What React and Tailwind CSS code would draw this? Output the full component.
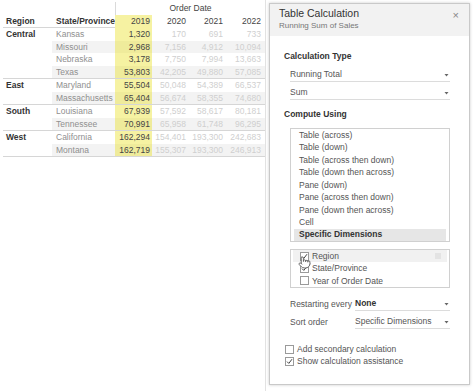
import React from "react";
import { Pointer } from "lucide-react";

const groups = [
  { region: "Central", rows: [
    ["Kansas", "1,320", "170", "691", "733"],
    ["Missouri", "2,968", "7,156", "4,912", "10,094"],
    ["Nebraska", "3,178", "7,750", "7,994", "13,663"],
    ["Texas", "53,803", "42,205", "49,880", "57,085"],
  ]},
  { region: "East", rows: [
    ["Maryland", "55,504", "50,048", "54,389", "66,537"],
    ["Massachusetts", "65,404", "56,674", "58,355", "74,680"],
  ]},
  { region: "South", rows: [
    ["Louisiana", "67,939", "57,592", "58,617", "80,181"],
    ["Tennessee", "70,991", "65,958", "61,748", "96,295"],
  ]},
  { region: "West", rows: [
    ["California", "162,294", "154,401", "193,300", "242,683"],
    ["Montana", "162,719", "155,307", "193,300", "246,913"],
  ]},
];

const computeItems = [
  "Table (across)",
  "Table (down)",
  "Table (across then down)",
  "Table (down then across)",
  "Pane (down)",
  "Pane (across then down)",
  "Pane (down then across)",
  "Cell",
];

function Caret() {
  return (
    <svg width="5" height="4" viewBox="0 0 5 4" className="shrink-0">
      <path d="M0.5 1 L4.5 1 L2.5 3.5 Z" fill="#666" />
    </svg>
  );
}

function Check({ checked }) {
  return (
    <div className="w-[9px] h-[9px] border border-[#9a9a9a] bg-white flex items-center justify-center shrink-0">
      {checked && (
        <svg width="7" height="7" viewBox="0 0 7 7">
          <path d="M1 3.6 L2.8 5.4 L6 1.2" fill="none" stroke="#444" strokeWidth="1" />
        </svg>
      )}
    </div>
  );
}

function Dropdown({ children, bold }) {
  return (
    <div className={`flex-1 h-[14px] border-b border-[#dcdcdc] flex items-center justify-between pr-[1px] ${bold ? "font-bold text-[#333]" : "text-[#555]"}`}>
      <span>{children}</span>
      <Caret />
    </div>
  );
}

export default function App() {
  return (
    <div className="w-[474px] h-[391px] bg-white flex font-['Liberation_Sans',Arial,sans-serif] text-[8.5px] leading-none overflow-hidden">
      {/* Table view */}
      <div className="w-[266px] h-[391px] border-r border-[#e2e2e2] pl-[3px] shrink-0">
        <div className="flex h-[15px] pt-[2px]">
          <div className="w-[112px]" />
          <div className="w-[150px] border-l border-[#dadada] flex items-center justify-center text-[#444]">
            Order Date
          </div>
        </div>
        <div className="flex h-[13px]">
          <div className="w-[112px] flex border-b border-[#d6d6d6] text-[#333] font-bold">
            <div className="w-[49px] pl-[3px] flex items-center">Region</div>
            <div className="w-[63px] pl-[4px] flex items-center">State/Province</div>
          </div>
          <div className="w-[37px] bg-[#f6f2a2] text-right pr-[2px] flex items-center justify-end text-[#444]">2019</div>
          <div className="w-[37px] pr-[3px] flex items-center justify-end text-[#444]">2020</div>
          <div className="w-[37px] pr-[3px] flex items-center justify-end text-[#444]">2021</div>
          <div className="w-[39px] pr-[4px] flex items-center justify-end text-[#444]">2022</div>
        </div>
        {groups.map((g) => (
          <div key={g.region} className="flex border-b border-[#d6d6d6]">
            <div className="w-[49px] pl-[3px] pt-[2px] font-bold text-[#333]">{g.region}</div>
            <div className="flex flex-col">
              {g.rows.map((r, i) => (
                <div key={r[0]} className={`flex h-[12.5px] ${i % 2 === 1 ? "bg-[#f3f3f3]" : ""}`}>
                  <div className="w-[63px] pl-[4px] flex items-center text-[#8f8f8f]">{r[0]}</div>
                  <div className={`w-[37px] pr-[2px] flex items-center justify-end text-[#444] ${i % 2 === 1 ? "bg-[#efeb9b]" : "bg-[#f6f2a2]"}`}>{r[1]}</div>
                  <div className="w-[37px] pr-[3px] flex items-center justify-end text-[#cfcfcf]">{r[2]}</div>
                  <div className="w-[37px] pr-[3px] flex items-center justify-end text-[#cfcfcf]">{r[3]}</div>
                  <div className="w-[39px] pr-[4px] flex items-center justify-end text-[#cfcfcf]">{r[4]}</div>
                </div>
              ))}
            </div>
          </div>
        ))}
      </div>

      {/* Table Calculation panel */}
      <div className="relative ml-[3px] mt-[3px] w-[201px] h-[382px] border border-[#c9c9c9] shadow-[0_0_3px_rgba(0,0,0,0.2)] bg-white shrink-0 flex flex-col">
        <div className="h-[32px] bg-[#f2f2f2] pl-[9px] pr-[10px] pt-[3px] flex justify-between">
          <div className="flex flex-col">
            <span className="text-[10.5px] leading-[13px] text-[#333]">Table Calculation</span>
            <span className="text-[8px] leading-[11px] text-[#777]">Running Sum of Sales</span>
          </div>
          <span className="text-[11px] leading-[13px] text-[#888] mt-[2px]">×</span>
        </div>

        <div className="pl-[14px] pr-[19px] flex flex-col">
          <div className="mt-[15px] h-[11px] flex items-center font-bold text-[#333]">Calculation Type</div>
          <div className="mt-[6px] pl-[6px] flex"><Dropdown>Running Total</Dropdown></div>
          <div className="mt-[4px] pl-[6px] flex"><Dropdown>Sum</Dropdown></div>

          <div className="mt-[9px] h-[11px] flex items-center font-bold text-[#333]">Compute Using</div>
          <div className="mt-[8px] ml-[6px] h-[114px] border border-[#d0d0d0] px-[3px] flex flex-col text-[#555]">
            {computeItems.map((t) => (
              <div key={t} className="h-[12.5px] pl-[5px] flex items-center">{t}</div>
            ))}
            <div className="h-[12.5px] pl-[5px] flex items-center bg-[#e6e6e6] font-bold text-[#333]">Specific Dimensions</div>
          </div>

          <div className="relative mt-[7px] ml-[6px] h-[39px] border border-[#d0d0d0] px-[2px] flex flex-col text-[#555]">
            <div className="h-[12.5px] pl-[7px] pr-[6px] flex items-center gap-[3px] bg-[#f1f1f1]">
              <Check checked />
              <span className="flex-1">Region</span>
              <svg width="6" height="6" viewBox="0 0 6 6">
                <path d="M0 1 H6 M0 3 H6 M0 5 H6" stroke="#cfcfcf" strokeWidth="0.8" />
              </svg>
            </div>
            <div className="h-[12.5px] pl-[7px] flex items-center gap-[3px]">
              <Check checked />
              <span>State/Province</span>
            </div>
            <div className="h-[12.5px] pl-[7px] flex items-center gap-[3px]">
              <Check />
              <span>Year of Order Date</span>
            </div>
            <Pointer
              size={13}
              strokeWidth={1.6}
              color="#555"
              fill="white"
              className="absolute left-[7px] top-[6px]"
            />
          </div>

          <div className="mt-[9px] ml-[6px] flex items-center">
            <span className="w-[65px] text-[#555]">Restarting every</span>
            <Dropdown bold>None</Dropdown>
          </div>
          <div className="mt-[4px] ml-[6px] flex items-center">
            <span className="w-[65px] text-[#555]">Sort order</span>
            <Dropdown>Specific Dimensions</Dropdown>
          </div>

          <div className="mt-[14px] h-[12px] flex items-center gap-[3px] text-[#555] ml-[1px]">
            <Check />
            <span>Add secondary calculation</span>
          </div>
          <div className="h-[12px] flex items-center gap-[3px] text-[#555] ml-[1px]">
            <Check checked />
            <span>Show calculation assistance</span>
          </div>
        </div>
      </div>
    </div>
  );
}
